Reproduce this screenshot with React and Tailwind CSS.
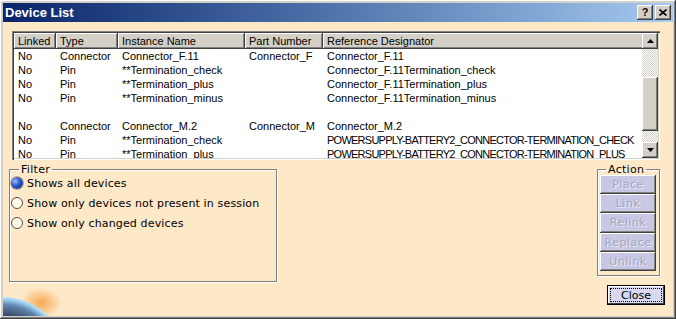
const rows = [
  ["No", "Connector", "Connector_F.11", "Connector_F", "Connector_F.11"],
  ["No", "Pin", "**Termination_check", "", "Connector_F.11Termination_check"],
  ["No", "Pin", "**Termination_plus", "", "Connector_F.11Termination_plus"],
  ["No", "Pin", "**Termination_minus", "", "Connector_F.11Termination_minus"],
  null,
  ["No", "Connector", "Connector_M.2", "Connector_M", "Connector_M.2"],
  ["No", "Pin", "**Termination_check", "", "POWERSUPPLY-BATTERY2_CONNECTOR-TERMINATION_CHECK"],
  ["No", "Pin", "**Termination_plus", "", "POWERSUPPLY-BATTERY2_CONNECTOR-TERMINATION_PLUS"],
];

const cols = [
  { label: "Linked", w: "w-[42px]" },
  { label: "Type", w: "w-[62px]" },
  { label: "Instance Name", w: "w-[127px]" },
  { label: "Part Number", w: "w-[78px]" },
  { label: "Reference Designator", w: "w-[322px]" },
];

const bevel = "shadow-[inset_-1px_-1px_0_#404040,inset_1px_1px_0_#ffffff,inset_-2px_-2px_0_#808080]";

const ArrowBtn = ({ up }) => (
  <div className={`h-[16px] w-[16px] bg-[#d4d0c8] ${bevel} flex items-center justify-center`}>
    <svg width="7" height="4" viewBox="0 0 7 4">
      {up ? <path d="M3.5 0 L7 4 L0 4 Z" fill="#000" /> : <path d="M0 0 L7 0 L3.5 4 Z" fill="#000" />}
    </svg>
  </div>
);

const Radio = ({ checked, label }) => (
  <div className="flex items-center gap-[4px] h-[20px]">
    {checked ? (
      <div className="h-[12px] w-[12px] rounded-full bg-[radial-gradient(circle_at_35%_35%,#9ab8ff_0%,#2a55c8_45%,#0a2a80_100%)] shadow-[0_0_0_1px_#c9a87a]" />
    ) : (
      <div className="h-[12px] w-[12px] rounded-full border border-[#505050] bg-[#fffbe8]" />
    )}
    <span className="tracking-[0.15px]">{label}</span>
  </div>
);

const ActionBtn = ({ label }) => (
  <div className={`h-[19.2px] w-[56px] bg-[#c8c8e4] ${bevel} flex items-center justify-center text-[#a4a4c0] tracking-[0.5px] [text-shadow:1px_1px_0_#ececf8]`}>
    {label}
  </div>
);

export default function App() {
  return (
    <div className="w-[676px] h-[319px] bg-[#d4d0c8] shadow-[inset_-1px_-1px_0_#404040,inset_1px_1px_0_#ffffff,inset_-2px_-2px_0_#808080] p-[3px] flex flex-col text-[11px] text-black font-['Liberation_Sans',Arial,sans-serif] leading-none">
      <div className="h-[19px] flex items-center justify-between bg-gradient-to-r from-[#0a246a] to-[#a6caf0] pl-[2px] pr-[2px]">
        <span className="text-white font-bold text-[13px]">Device List</span>
        <div className="flex gap-[2px]">
          <div className={`h-[15px] w-[16px] bg-[#d4d0c8] ${bevel} flex items-center justify-center font-bold text-[11px]`}>?</div>
          <div className={`h-[15px] w-[16px] bg-[#d4d0c8] ${bevel} flex items-center justify-center`}>
            <svg width="8" height="7" viewBox="0 0 8 7"><path d="M0.5 0.5 L7.5 6.5 M7.5 0.5 L0.5 6.5" stroke="#000" strokeWidth="1.6" /></svg>
          </div>
        </div>
      </div>
      <div className="relative flex-1 bg-[#fde8c8] pt-[9px] px-[9px] overflow-hidden">
        <div className="w-[648px] h-[129px] bg-white shadow-[inset_1px_1px_0_#808080,inset_2px_2px_0_#404040,inset_-1px_-1px_0_#ffffff,inset_-2px_-2px_0_#d4d0c8] p-[2px] flex">
          <div className="flex-1 overflow-hidden">
            <div className="flex h-[16px]">
              {cols.map((c) => (
                <div key={c.label} className={`${c.w} shrink-0 h-[16px] bg-[#d4d0c8] ${bevel} flex items-center pl-[4px]`}>
                  {c.label}
                </div>
              ))}
            </div>
            {rows.map((r, i) => (
              <div key={i} className="flex h-[14px] items-center">
                {r &&
                  r.map((cell, j) => (
                    <div
                      key={j}
                      className={`${cols[j].w} shrink-0 pl-[4px] whitespace-nowrap ${/^[A-Z0-9_-]+$/.test(cell) ? "tracking-[-0.75px]" : ""}`}
                    >
                      {cell}
                    </div>
                  ))}
              </div>
            ))}
          </div>
          <div className="w-[16px] h-[125px] flex flex-col bg-[repeating-conic-gradient(#d4d0c8_0_25%,#ffffff_0_50%)] bg-[length:2px_2px]">
            <ArrowBtn up />
            <div className="h-[28px]" />
            <div className={`h-[54px] bg-[#d4d0c8] ${bevel}`} />
            <div className="flex-1" />
            <ArrowBtn />
          </div>
        </div>
        <div className="flex mt-[4px]">
          <fieldset className="ml-[-3px] w-[268px] h-[118px] border border-[#808080] shadow-[inset_1px_1px_0_#ffffff,1px_1px_0_#ffffff] px-[1px] font-['DejaVu_Sans',sans-serif] text-[11px]">
            <legend className="ml-[8px] px-[2px] tracking-[0.3px]">Filter</legend>
            <div className="flex flex-col mt-[-2px]">
              <Radio checked label="Shows all devices" />
              <Radio label="Show only devices not present in session" />
              <Radio label="Show only changed devices" />
            </div>
          </fieldset>
          <div className="ml-auto mr-[-1px] flex flex-col items-end">
            <fieldset className="mr-[5px] w-[63px] h-[112px] border border-[#808080] shadow-[inset_1px_1px_0_#ffffff,1px_1px_0_#ffffff] px-[2px] font-['DejaVu_Sans',sans-serif] text-[11px]">
              <legend className="ml-[6px] px-[2px] tracking-[0.3px]">Action</legend>
              <div className="flex flex-col">
                <ActionBtn label="Place" />
                <ActionBtn label="Link" />
                <ActionBtn label="Relink" />
                <ActionBtn label="Replace" />
                <ActionBtn label="Unlink" />
              </div>
            </fieldset>
            <div className="mt-[9px] h-[20px] w-[58px] bg-[#d8d8f0] border border-black shadow-[inset_-1px_-1px_0_#404040,inset_1px_1px_0_#ffffff] flex items-center justify-center p-[2px] font-['DejaVu_Sans',sans-serif]">
              <div className="w-full h-full border border-dotted border-black flex items-center justify-center">Close</div>
            </div>
          </div>
        </div>
        <div className="absolute left-0 bottom-0 w-[64px] h-[28px] overflow-hidden">
          <div className="absolute left-[18px] top-[0px] w-[40px] h-[30px] rounded-full bg-[radial-gradient(ellipse,#f6a850_0%,#fbd09a_45%,transparent_72%)]" />
          <div className="absolute left-[-63px] top-[9px] w-[126px] h-[126px] rounded-full bg-[radial-gradient(closest-side,#283040_0%,#3a4660_70%,#5f88b0_88%,#9ccff0_96%,#c0e4f8_100%)]" />
        </div>
      </div>
    </div>
  );
}
